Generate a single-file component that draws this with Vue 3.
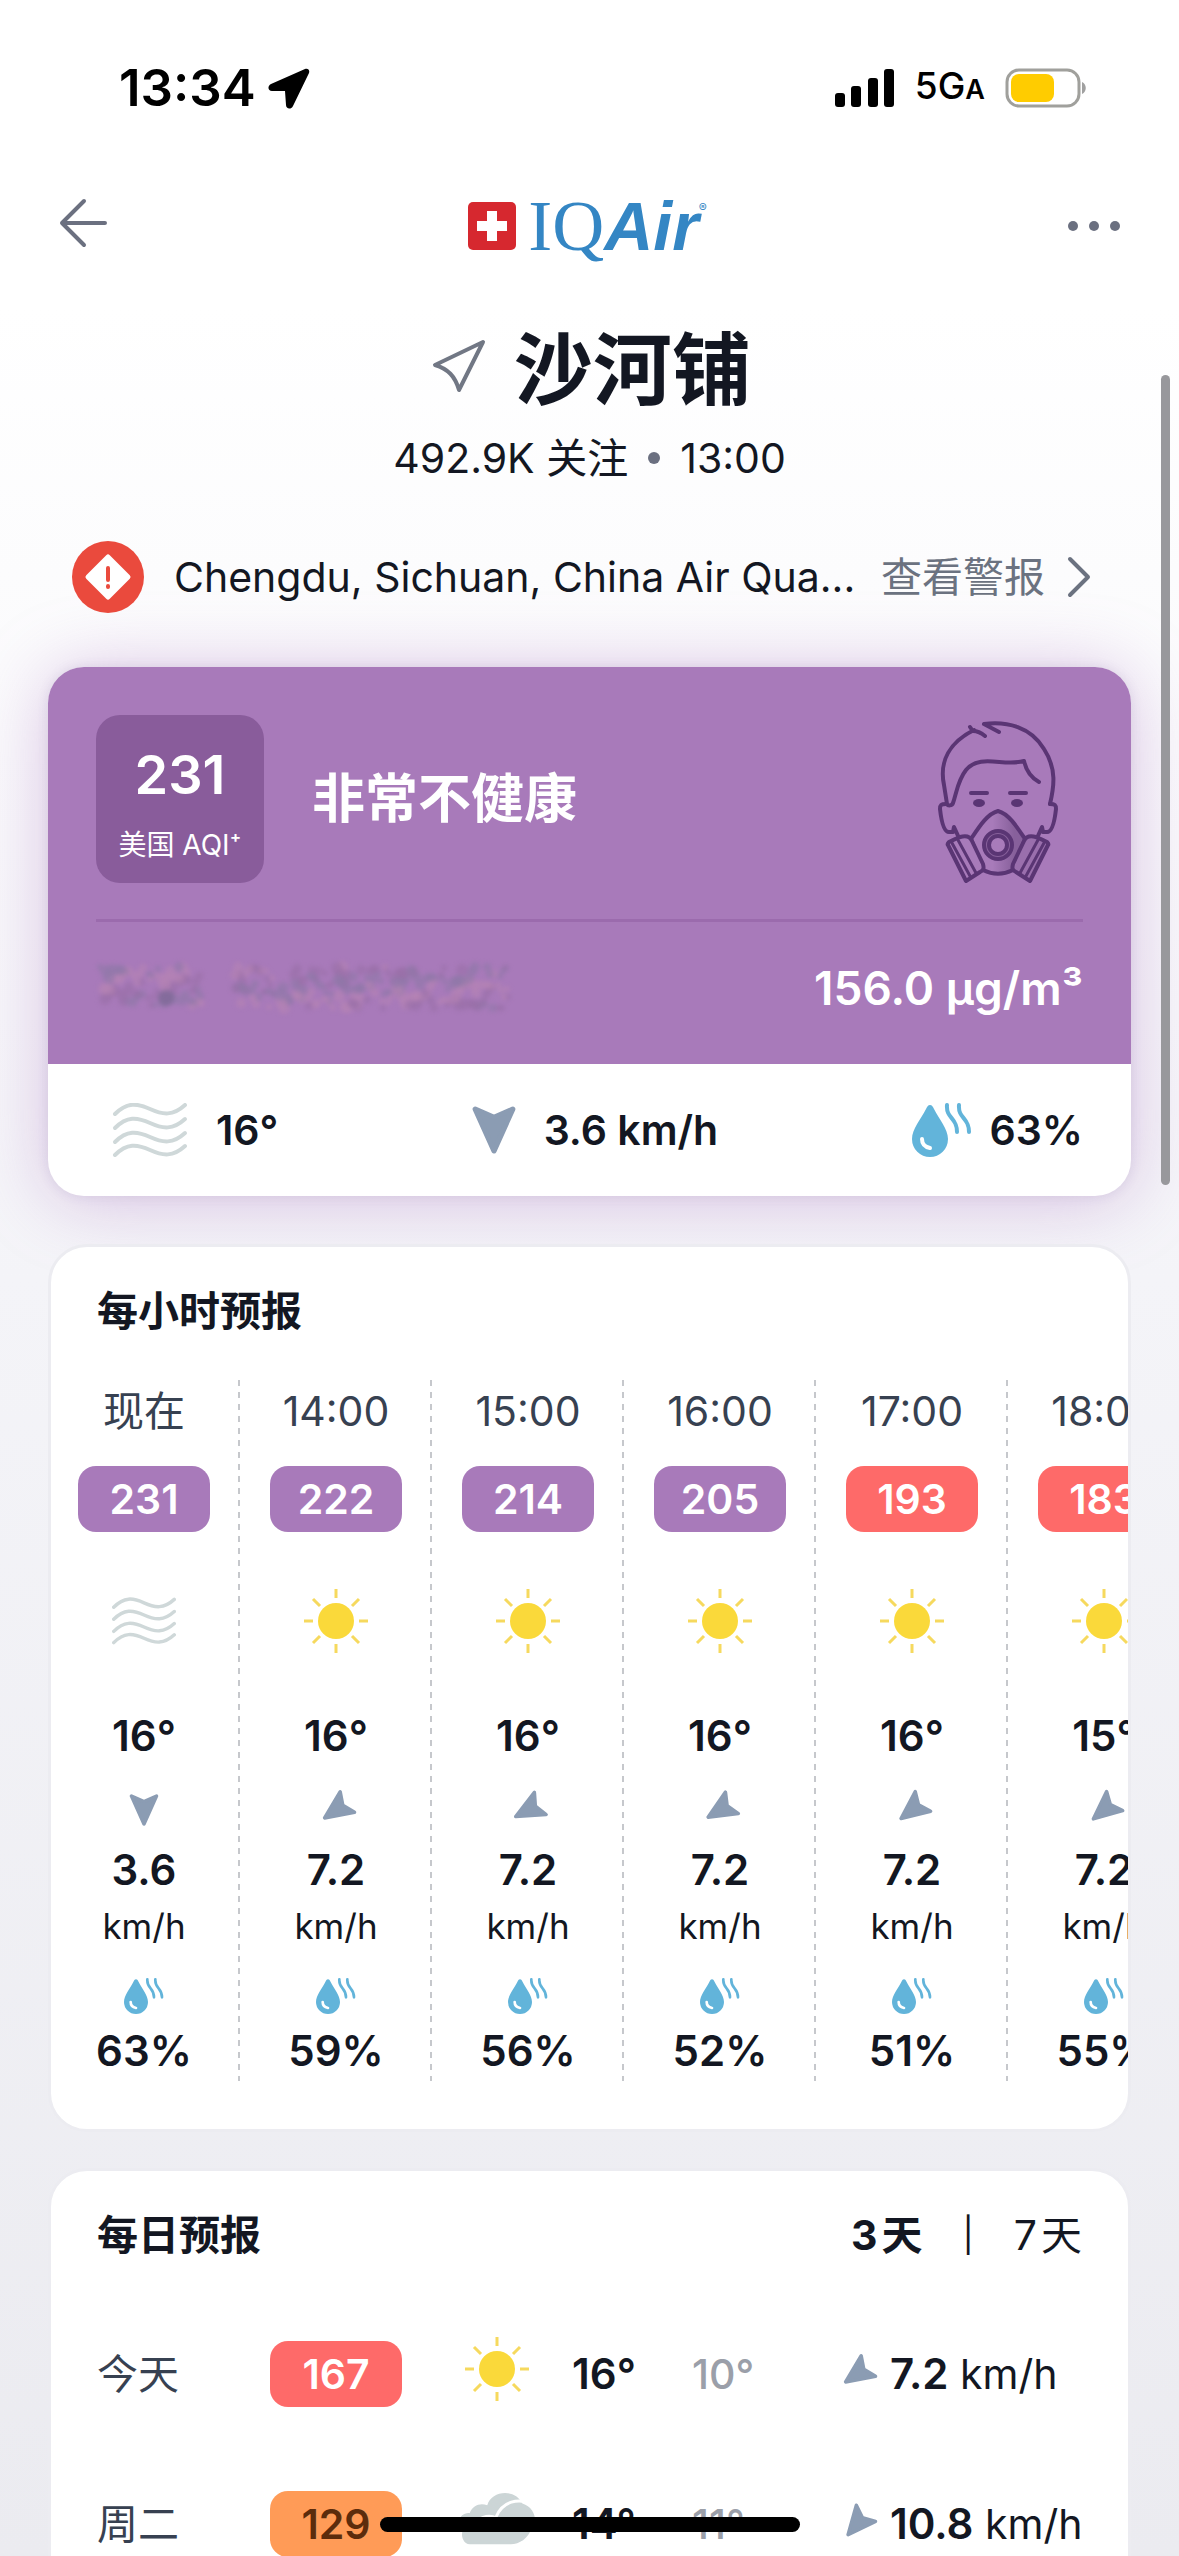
<script setup>
import { ref } from 'vue'

const hours = [
  { time: '现在', aqi: 231, level: 'purple', sky: 'haze', temp: 16, turn: 0, wind: '3.6', humidity: 63 },
  { time: '14:00', aqi: 222, level: 'purple', sky: 'sun', temp: 16, turn: 55, wind: '7.2', humidity: 59 },
  { time: '15:00', aqi: 214, level: 'purple', sky: 'sun', temp: 16, turn: 62, wind: '7.2', humidity: 56 },
  { time: '16:00', aqi: 205, level: 'purple', sky: 'sun', temp: 16, turn: 59, wind: '7.2', humidity: 52 },
  { time: '17:00', aqi: 193, level: 'red', sky: 'sun', temp: 16, turn: 52, wind: '7.2', humidity: 51 },
  { time: '18:00', aqi: 183, level: 'red', sky: 'sun', temp: 15, turn: 50, wind: '7.2', humidity: 55 },
]

const days = [
  { day: '今天', aqi: 167, level: 'red', sky: 'sun', high: 16, low: 10, turn: 55, wind: '7.2' },
  { day: '周二', aqi: 129, level: 'orange', sky: 'cloud', high: 14, low: 11, turn: 40, wind: '10.8' },
]

const range = ref(3)

// Soft specks that cover the hidden pollutant name
const tints = ['#8f78a8', '#b07cc8', '#9a70a8', '#9d7fd0', '#b583b4', '#8d84a0']
const specks = Array.from({ length: 320 }, (_, i) => ({
  x: 4 + ((i * 73) % 409),
  y: 6 + ((i * 31 + ((i * i) % 17)) % 42),
  r: 3 + ((i * 7) % 4),
  fill: tints[(i * 5 + (i % 4)) % 6],
})).filter((s) => (s.x < 106 || s.x > 136) && (s.x < 178 || s.x > 196 || s.y > 22))
</script>

<template>
  <div class="screen">
    <svg class="defs" aria-hidden="true">
      <symbol id="haze" viewBox="0 0 74 54">
        <g fill="none" stroke="#cfd8d9" stroke-width="4" stroke-linecap="round">
          <path d="M2 11C14-1 24 0 37 6s23 7 35-4" />
          <path d="M2 25C14 13 24 14 37 20s23 7 35-4" />
          <path d="M2 39C14 27 24 28 37 34s23 7 35-4" />
          <path d="M2 52C14 40 24 41 37 47s23 7 35-4" />
        </g>
      </symbol>
      <symbol id="sun" viewBox="0 0 64 66">
        <circle cx="32" cy="33" r="18" fill="#fad93a" />
        <path d="M32 1v9M32 56v9M0 33h9M55 33h9M9 11l7 7M48 48l7 7M55 11l-7 7M16 48l-7 7" stroke="#f6d95e" stroke-width="3" />
      </symbol>
      <symbol id="cloud" viewBox="0 0 80 56">
        <path d="M12 54C4 54 1 40 8 37-3 33 2 21 12 22c3-8 11-11 18-8C34-1 58-4 66 12c14 4 17 22 8 29-4 8-12 13-20 13z" fill="#ccd5d6" />
        <path d="M20 30c9-8 24-6 27 6M39 26c7-17 23-19 36-14" fill="none" stroke="#fff" stroke-width="3" />
      </symbol>
      <symbol id="wind" viewBox="0 0 42 46">
        <path d="M3 3l18 8 18-8-18 40z" fill="#8b9cb3" stroke="#8b9cb3" stroke-width="5" stroke-linejoin="round" />
      </symbol>
      <symbol id="humidity" viewBox="0 0 60 54">
        <path d="M18 2c2 0 3 2 4 4 5 10 14 20 14 30a18 18 0 0 1-36 0C0 26 9 16 14 6c1-2 2-4 4-4z" fill="#62b4da" />
        <path d="M10 36c0 5 3 8 8 9" fill="none" stroke="#fff" stroke-width="4" stroke-linecap="round" />
        <path d="M35 2c-1 14 10 12 10 27M47 2c-1 14 10 12 10 27" fill="none" stroke="#62b4da" stroke-width="4" stroke-linecap="round" />
      </symbol>
    </svg>

    <div class="status">
      <div class="status-left">
        <span class="clock">13:34</span>
        <svg width="42" height="42" viewBox="0 0 42 42"><path d="M37 2L3 17c-4 2-3 7 1 7h13l1 14c0 4 5 5 7 1L41 6c1-3-1-5-4-4z" /></svg>
      </div>
      <div class="status-right">
        <svg width="60" height="38" viewBox="0 0 60 38">
          <rect x="0" y="24" width="10" height="14" rx="3" /><rect x="16" y="17" width="10" height="21" rx="3" />
          <rect x="33" y="9" width="10" height="29" rx="3" /><rect x="49" y="0" width="10" height="38" rx="3" />
        </svg>
        <span class="network">5G<small>A</small></span>
        <svg width="82" height="40" viewBox="0 0 82 40">
          <rect x="2" y="2" width="72" height="36" rx="12" fill="#fff" stroke="#a0a09c" stroke-width="3" />
          <rect x="6" y="6" width="43" height="28" rx="8" fill="#ffcc00" />
          <path d="M77 14c5 2 5 10 0 12z" fill="#a0a0a0" />
        </svg>
      </div>
    </div>

    <header class="nav">
      <button type="button" class="icon-button" aria-label="返回">
        <svg width="50" height="56" viewBox="0 0 50 56"><path d="M26 3L4 25l22 22M4 25h43" fill="none" stroke="#6b7080" stroke-width="4" stroke-linecap="round" stroke-linejoin="round" /></svg>
      </button>
      <a class="logo" href="#" aria-label="IQAir">
        <svg width="48" height="48" viewBox="0 0 48 48"><rect width="48" height="48" rx="5" fill="#d6282f" /><path d="M19 9h10v10h10v10H29v10H19V29H9V19h10z" fill="#fff" /></svg>
        <span class="logo-iq">IQ</span><span class="logo-air">Air</span><sup>®</sup>
      </a>
      <button type="button" class="icon-button" aria-label="更多">
        <svg width="54" height="12" viewBox="0 0 54 12" fill="#6b7080"><circle cx="6" cy="6" r="5" /><circle cx="27" cy="6" r="5" /><circle cx="48" cy="6" r="5" /></svg>
      </button>
    </header>

    <main>
      <section class="place">
        <h1>
          <svg width="54" height="62" viewBox="0 0 54 62"><path d="M51 3L3 26c13 4 20 11 24 25z" fill="none" stroke="#717784" stroke-width="4" stroke-linejoin="round" /></svg>
          沙河铺
        </h1>
        <p>492.9K 关注<i class="dot"></i>13:00</p>
      </section>

      <section class="alert">
        <svg width="72" height="72" viewBox="0 0 72 72">
          <circle cx="36" cy="36" r="36" fill="#ea4a3d" />
          <path d="M36 16l20 20-20 20-20-20z" fill="#fff" stroke="#fff" stroke-width="5" stroke-linejoin="round" />
          <path d="M36 27v12M36 45v1" stroke="#ea4a3d" stroke-width="4" stroke-linecap="round" />
        </svg>
        <p>Chengdu, Sichuan, China Air Qua...</p>
        <a href="#">查看警报
          <svg width="24" height="42" viewBox="0 0 24 42"><path d="M3 3l18 18L3 39" fill="none" stroke="#6b7280" stroke-width="4" stroke-linecap="round" stroke-linejoin="round" /></svg>
        </a>
      </section>

      <section class="hero">
        <div class="hero-top">
          <div class="summary">
            <div class="aqi"><strong>231</strong><span>美国 AQI⁺</span></div>
            <h2>非常不健康</h2>
            <svg class="face" width="126" height="164" viewBox="0 0 126 164" fill="none" stroke="#5a3574" stroke-width="4" stroke-linecap="round" stroke-linejoin="round">
              <defs>
                <linearGradient id="shade"><stop offset="0.4" stop-color="#a87bba" /><stop offset="0.8" stop-color="#87609b" /></linearGradient>
              </defs>
              <path d="M64 13L49 5c23-3 47 3 60 25 13 20 10 38 6 55M35 8c2 3 3 4 3 4s6 0 12 5M39 11C15 23 4 42 9 66l3 19c1 2 5 2 6-1 4-12 5-23 13-33 14-17 38-3 58-9 2 9 6 16 15 21" />
              <path d="M36 74h16M75 74h16" />
              <g fill="#5a3574" stroke="none"><ellipse cx="44" cy="84" rx="6" ry="4" /><ellipse cx="82" cy="84" rx="6" ry="4" /></g>
              <path d="M63 92c-11 3-19 16-27 28l12 31c10 5 20 5 30 0l12-31c-8-12-16-25-27-28z" fill="url(#shade)" />
              <g>
                <path d="M11 85c-5 0-6 1-6 5 1 9 3 23 9 23h4l1-5 5 11" />
                <path d="M13 126c-1-1 0-2 1-3 8-4 19-10 23-1l11 23c1 4 1 6-3 8l-14 9z" fill="#a87bba" /><path d="M17 124l18 33M23 121l18 33" stroke-width="3" />
              </g>
              <g transform="translate(126 0) scale(-1 1)">
                <path d="M11 85c-5 0-6 1-6 5 1 9 3 23 9 23h4l1-5 5 11" />
                <path d="M13 126c-1-1 0-2 1-3 8-4 19-10 23-1l11 23c1 4 1 6-3 8l-14 9z" fill="#9a6fad" /><path d="M17 124l18 33M23 121l18 33" stroke-width="3" />
              </g>
              <circle cx="63" cy="126" r="14" fill="#87609b" /><circle cx="63" cy="126" r="9" fill="#a87bba" />
            </svg>
          </div>
          <div class="pollutant">
            <svg class="hidden-name" width="420" height="54" viewBox="0 0 420 54" aria-hidden="true">
              <circle v-for="(s, i) in specks" :key="i" :cx="s.x" :cy="s.y" :r="s.r" :fill="s.fill" opacity="0.6" />
              <circle cx="70" cy="37" r="8" fill="#7f6a98" opacity="0.8" />
            </svg>
            <strong>156.0 µg/m³</strong>
          </div>
        </div>
        <ul class="now">
          <li><svg class="now-haze"><use href="#haze" /></svg>16°</li>
          <li><svg class="now-wind"><use href="#wind" /></svg>3.6 km/h</li>
          <li><svg class="now-humidity"><use href="#humidity" /></svg>63%</li>
        </ul>
      </section>

      <section class="card">
        <div class="card-head"><h3>每小时预报</h3></div>
        <ol class="hours">
          <li v-for="h in hours" :key="h.time">
            <span class="time">{{ h.time }}</span>
            <span class="badge" :class="h.level">{{ h.aqi }}</span>
            <svg class="sky"><use :href="'#' + h.sky" /></svg>
            <b>{{ h.temp }}°</b>
            <svg class="wind" :style="{ transform: `rotate(${h.turn}deg)` }"><use href="#wind" /></svg>
            <b>{{ h.wind }}</b>
            <span class="unit">km/h</span>
            <svg class="humidity"><use href="#humidity" /></svg>
            <b>{{ h.humidity }}%</b>
          </li>
        </ol>
      </section>

      <section class="card">
        <div class="card-head">
          <h3>每日预报</h3>
          <div class="range">
            <button type="button" :class="{ active: range === 3 }" @click="range = 3">3<span>天</span></button>
            <span class="bar">|</span>
            <button type="button" :class="{ active: range === 7 }" @click="range = 7">7<span>天</span></button>
          </div>
        </div>
        <table>
          <colgroup><col class="c-day" /><col class="c-aqi" /><col class="c-sky" /><col class="c-high" /><col class="c-low" /><col /></colgroup>
          <tbody>
            <tr v-for="d in days" :key="d.day">
              <th scope="row">{{ d.day }}</th>
              <td><span class="badge" :class="d.level">{{ d.aqi }}</span></td>
              <td><svg class="day-sky"><use :href="'#' + d.sky" /></svg></td>
              <td><b>{{ d.high }}°</b></td>
              <td class="low">{{ d.low }}°</td>
              <td>
                <div class="day-wind">
                  <svg class="wind" :style="{ transform: `rotate(${d.turn}deg)` }"><use href="#wind" /></svg>
                  <span><b>{{ d.wind }}</b> km/h</span>
                </div>
              </td>
            </tr>
          </tbody>
        </table>
      </section>
    </main>

    <div class="scrollbar"></div>
    <div class="home-bar"></div>
  </div>
</template>

<style>
body {
  margin: 0;
}
</style>

<style scoped>
.screen {
  position: relative;
  height: 100vh;
  overflow: hidden;
  background: linear-gradient(#fff 0, #fff 12%, #f4f4f8 50%, #ebebf0 100%);
  color: #131722;
  font: 400 41px/48px Inter, "Noto Sans CJK SC", sans-serif;
}
.defs {
  position: absolute;
  width: 0;
  height: 0;
}
svg {
  display: block;
  flex: none;
}
h1, h2, h3, p, ul, ol {
  margin: 0;
  padding: 0;
  list-style: none;
}
button {
  padding: 0;
  border: 0;
  background: none;
  color: inherit;
  font: inherit;
}
a {
  color: inherit;
  text-decoration: none;
}
b {
  font-size: 42px;
  font-weight: 600;
}

.status {
  display: flex;
  justify-content: space-between;
  align-items: center;
  height: 176px;
  padding: 0 92px 0 119px;
  color: #000;
}
.status-left, .status-right {
  display: flex;
  align-items: center;
}
.status-left {
  gap: 12px;
}
.status-right {
  gap: 20px;
}
.clock {
  font-size: 51px;
  font-weight: 600;
}
.network {
  font-size: 37px;
  font-weight: 500;
}
.network small {
  font-size: 27px;
  font-weight: 600;
}

.nav {
  display: flex;
  justify-content: space-between;
  align-items: center;
  height: 100px;
  padding: 0 58px;
}
.icon-button {
  display: flex;
}
.logo {
  display: flex;
  align-items: center;
  color: #3486c4;
  line-height: 72px;
}
.logo-iq {
  margin-left: 12px;
  font-family: "Liberation Serif", serif;
  font-size: 72px;
}
.logo-air {
  font-family: "Liberation Sans", sans-serif;
  font-size: 68px;
  font-style: italic;
  font-weight: 700;
}
.logo sup {
  align-self: flex-start;
  font-size: 12px;
  line-height: 36px;
}

.place {
  padding-top: 52px;
  text-align: center;
}
h1 {
  display: flex;
  justify-content: center;
  align-items: center;
  gap: 28px;
  padding-left: 4px;
  font-size: 79px;
  font-weight: 700;
  line-height: 84px;
}
.place p {
  display: flex;
  justify-content: center;
  align-items: center;
  margin-top: 22px;
}
.dot {
  width: 12px;
  height: 12px;
  margin: 0 20px;
  border-radius: 50%;
  background: #6b7080;
}

.alert {
  display: flex;
  align-items: center;
  margin: 59px 88px 54px 72px;
}
.alert p {
  flex: 1;
  min-width: 0;
  margin: 0 24px 0 30px;
  overflow: hidden;
  white-space: nowrap;
}
.alert a {
  display: flex;
  align-items: center;
  gap: 22px;
  color: #6b7280;
}

.hero {
  margin: 0 48px;
  border-radius: 36px;
  background: #fff;
  box-shadow: 0 0 12px rgba(90, 80, 130, 0.12), 0 4px 72px rgba(168, 110, 190, 0.4);
}
.hero-top {
  padding: 48px 48px 0;
  border-radius: 36px 36px 0 0;
  background: #a87aba;
  color: #fff;
}
.summary {
  display: flex;
  align-items: center;
  padding-bottom: 36px;
  border-bottom: 3px solid #9b6bad;
}
.aqi {
  display: flex;
  flex-direction: column;
  align-items: center;
  gap: 28px;
  box-sizing: border-box;
  width: 168px;
  height: 168px;
  padding-top: 36px;
  border-radius: 24px;
  background: #895c9b;
}
.aqi strong {
  font-size: 54px;
  font-weight: 600;
}
.aqi span {
  font-size: 28px;
  line-height: 36px;
}
h2 {
  flex: 1;
  margin-left: 48px;
  font-size: 53px;
  font-weight: 700;
}
.face {
  align-self: flex-end;
  margin-right: 22px;
}
.pollutant {
  display: flex;
  justify-content: space-between;
  align-items: center;
  height: 132px;
  padding-bottom: 10px;
}
.hidden-name {
  filter: blur(2px);
}
.pollutant strong {
  font-size: 46px;
  font-weight: 600;
}
.now {
  display: flex;
  justify-content: space-between;
  align-items: center;
  height: 132px;
  padding: 0 48px 0 64px;
  font-weight: 600;
}
.now li {
  display: flex;
  align-items: center;
}
.now-haze {
  width: 76px;
  height: 54px;
  margin-right: 28px;
}
.now-wind {
  width: 44px;
  height: 48px;
  margin-right: 28px;
}
.now-humidity {
  width: 60px;
  height: 54px;
  margin-right: 18px;
}

.card {
  margin: 48px 48px 0;
  overflow: hidden;
  border: 3px solid #ececf1;
  border-radius: 39px;
  background: #fff;
}
.card + .card {
  margin-top: 36px;
}
.card-head {
  display: flex;
  justify-content: space-between;
  align-items: center;
  height: 48px;
  padding: 40px 46px;
}
h3 {
  font-size: 41px;
  font-weight: 700;
}
.range {
  display: flex;
  align-items: center;
  gap: 40px;
}
.range button {
  display: flex;
  gap: 4px;
}
.range .active {
  font-weight: 700;
}
.bar {
  font-size: 34px;
}

.hours {
  display: flex;
  margin: 5px 0 48px -3px;
}
.hours li {
  display: flex;
  flex: none;
  flex-direction: column;
  align-items: center;
  width: 192px;
  padding-bottom: 6px;
  background: repeating-linear-gradient(#c6c8cc 0 6px, transparent 6px 12px) right / 2px 100% no-repeat;
}
.time {
  margin-bottom: 24px;
  color: #374151;
  line-height: 62px;
}
.badge {
  display: block;
  width: 132px;
  border-radius: 18px;
  color: #fff;
  font-weight: 600;
  line-height: 66px;
  text-align: center;
}
.purple {
  background: #a87aba;
}
.red {
  background: #fe6a69;
}
.orange {
  background: #ff9b57;
  color: #5c2c0c;
}
.sky {
  width: 64px;
  height: 66px;
  margin: 56px 0 58px;
}
.wind {
  width: 30px;
  height: 32px;
}
.hours .wind {
  margin: 34px 0 20px;
}
.unit {
  margin: 8px 0 28px;
  font-size: 35px;
}
.humidity {
  width: 40px;
  height: 36px;
  margin-bottom: 13px;
}

table {
  width: 100%;
  padding: 0 46px;
  border-spacing: 0;
  table-layout: fixed;
}
.c-day { width: 173px; }
.c-aqi { width: 188px; }
.c-sky { width: 114px; }
.c-high { width: 120px; }
.c-low { width: 150px; }
tr {
  height: 150px;
}
th, td {
  padding: 0;
  font-weight: 400;
  text-align: left;
  white-space: nowrap;
}
th {
  color: #374151;
}
.day-sky {
  width: 78px;
  height: 66px;
  margin-bottom: 10px;
}
.low {
  color: #9b9fa9;
  font-weight: 500;
}
.day-wind {
  display: flex;
  align-items: center;
  gap: 18px;
}

.scrollbar {
  position: absolute;
  top: 375px;
  right: 9px;
  width: 9px;
  height: 810px;
  border-radius: 5px;
  background: #98989c;
}
.home-bar {
  position: absolute;
  bottom: 24px;
  left: 50%;
  width: 420px;
  height: 15px;
  margin-left: -210px;
  border-radius: 8px;
  background: #000;
}
</style>
